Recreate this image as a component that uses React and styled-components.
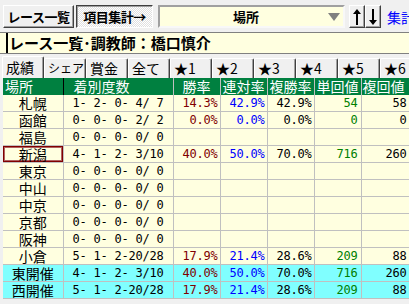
import styled, { createGlobalStyle, css } from 'styled-components';

const GlobalStyle = createGlobalStyle`
  html, body { margin: 0; padding: 0; background: #f0f0f0; }
  body { font-family: "Noto Sans CJK JP", "Noto Sans", sans-serif; }
`;

const rows = [
  { place: '札幌', count: '1- 2- 0- 4/ 7', win: '14.3%', ren: '42.9%', fuku: '42.9%', tan: '54', fkv: '58' },
  { place: '函館', count: '0- 0- 0- 2/ 2', win: '0.0%', ren: '0.0%', fuku: '0.0%', tan: '0', fkv: '0' },
  { place: '福島', count: '0- 0- 0- 0/ 0' },
  { place: '新潟', count: '4- 1- 2- 3/10', win: '40.0%', ren: '50.0%', fuku: '70.0%', tan: '716', fkv: '260', selected: true },
  { place: '東京', count: '0- 0- 0- 0/ 0' },
  { place: '中山', count: '0- 0- 0- 0/ 0' },
  { place: '中京', count: '0- 0- 0- 0/ 0' },
  { place: '京都', count: '0- 0- 0- 0/ 0' },
  { place: '阪神', count: '0- 0- 0- 0/ 0' },
  { place: '小倉', count: '5- 1- 2-20/28', win: '17.9%', ren: '21.4%', fuku: '28.6%', tan: '209', fkv: '88' },
  { place: '東開催', count: '4- 1- 2- 3/10', win: '40.0%', ren: '50.0%', fuku: '70.0%', tan: '716', fkv: '260', total: true },
  { place: '西開催', count: '5- 1- 2-20/28', win: '17.9%', ren: '21.4%', fuku: '28.6%', tan: '209', fkv: '88', total: true },
];

const tabs = ['成績', 'シェア', '賞金', '全て', '★1', '★2', '★3', '★4', '★5', '★6'];

function App() {
  return (
    <Window>
      <GlobalStyle />
      <TopBar>
        <Button $w={71}>レース一覧</Button>
        <Button $w={77} $pressed>項目集計→</Button>
        <Combo>
          <ComboText>場所</ComboText>
          <Caret />
        </Combo>
        <ArrowGroup>
          <ArrowButton>
            <svg width="8" height="16" viewBox="0 0 8 16">
              <path d="M4 0 L8 5 L5 5 L5 16 L3 16 L3 5 L0 5 Z" fill="#000" />
            </svg>
          </ArrowButton>
          <ArrowButton>
            <svg width="8" height="16" viewBox="0 0 8 16">
              <path d="M4 16 L8 11 L5 11 L5 0 L3 0 L3 11 L0 11 Z" fill="#000" />
            </svg>
          </ArrowButton>
        </ArrowGroup>
        <LinkText>集計</LinkText>
      </TopBar>

      <TitleBar>
        <TitleText>レース一覧･調教師：橋口慎介</TitleText>
      </TitleBar>

      <TabRow>
        {tabs.map((t, i) => (
          <Tab key={t} $active={i === 0} $narrow={t === 'シェア'}>{t}</Tab>
        ))}
      </TabRow>

      <Table>
        <colgroup>
          <col style={{ width: 60 }} />
          <col style={{ width: 110 }} />
          <col style={{ width: 47 }} />
          <col style={{ width: 47 }} />
          <col style={{ width: 47 }} />
          <col style={{ width: 47 }} />
          <col style={{ width: 52 }} />
        </colgroup>
        <thead>
          <tr>
            <Th $first $pad={2}>場所</Th>
            <Th $pad={10}>着別度数</Th>
            <Th $center>勝率</Th>
            <Th $center>連対率</Th>
            <Th $center>複勝率</Th>
            <Th $center>単回値</Th>
            <Th $pad={1}>複回値</Th>
          </tr>
        </thead>
        <tbody>
          {rows.map((r) => (
            <Row key={r.place} $total={r.total}>
              <PlaceCell $selected={r.selected}>{r.place}</PlaceCell>
              <CountCell>{r.count}</CountCell>
              <NumCell $color="#800000">{r.win}</NumCell>
              <NumCell $color="#0000ff">{r.ren}</NumCell>
              <NumCell $color="#000">{r.fuku}</NumCell>
              <NumCell $color="#008000" $right={3}>{r.tan}</NumCell>
              <NumCell $color="#000" $right={6}>{r.fkv}</NumCell>
            </Row>
          ))}
        </tbody>
      </Table>
    </Window>
  );
}

const Window = styled.div`
  width: 409px;
  height: 304px;
  overflow: hidden;
  background: #f0f0f0;
`;

const TopBar = styled.div`
  display: flex;
  align-items: flex-start;
  height: 32px;
  box-sizing: border-box;
  padding: 5px 0 0 3px;
`;

const Button = styled.div`
  box-sizing: border-box;
  flex: none;
  width: ${(p) => p.$w}px;
  height: 23px;
  margin-right: 2px;
  display: flex;
  align-items: center;
  justify-content: center;
  white-space: nowrap;
  font-size: 13px;
  font-weight: bold;
  letter-spacing: -0.5px;
  color: #000;
  border: 1px solid;
  border-color: #fff #404040 #404040 #fff;
  box-shadow: inset -1px -1px 0 #a0a0a0;
  background: #f0f0f0;
  ${(p) =>
    p.$pressed &&
    css`
      border-color: #404040 #fff #fff #404040;
      box-shadow: inset 1px 1px 0 #a0a0a0;
      background: repeating-conic-gradient(#ffffff 0 25%, #e0e0e0 0 50%) 0 0 / 2px 2px;
    `}
`;

const Combo = styled.div`
  box-sizing: border-box;
  flex: none;
  width: 187px;
  height: 23px;
  margin-left: 3px;
  display: flex;
  align-items: center;
  background: #ffffe0;
  border: 2px solid;
  border-color: #a0a0a0 #f8f8f8 #f8f8f8 #a0a0a0;
`;

const ComboText = styled.span`
  flex: 1;
  text-align: center;
  font-size: 13px;
  font-weight: bold;
  padding-left: 4px;
`;

const Caret = styled.span`
  width: 0;
  height: 0;
  margin-right: 3px;
  border-left: 6px solid transparent;
  border-right: 6px solid transparent;
  border-top: 8px solid #808080;
`;

const ArrowGroup = styled.div`
  display: flex;
  flex: none;
  margin-left: 4px;
`;

const ArrowButton = styled.div`
  box-sizing: border-box;
  width: 16px;
  height: 23px;
  display: flex;
  align-items: center;
  justify-content: center;
  background: #f0f0f0;
  border: 1px solid;
  border-color: #fff #404040 #404040 #fff;
  box-shadow: inset -1px -1px 0 #a0a0a0;
`;

const LinkText = styled.span`
  margin-left: 6px;
  margin-top: 2px;
  font-size: 14px;
  color: #0000ff;
  white-space: nowrap;
`;

const TitleBar = styled.div`
  box-sizing: border-box;
  height: 22px;
  background: #ffffe0;
  border-top: 1px solid #808080;
  border-bottom: 1px solid #808080;
  padding-left: 6px;
  display: flex;
`;

const TitleText = styled.div`
  border-left: 2px solid #000;
  padding-left: 1px;
  font-size: 15px;
  font-weight: bold;
  line-height: 20px;
  white-space: nowrap;
`;

const TabRow = styled.div`
  display: flex;
  height: 24px;
  box-sizing: border-box;
  padding: 2px 0 0 2px;
  align-items: flex-end;
`;

const Tab = styled.div`
  box-sizing: border-box;
  width: 42px;
  flex: none;
  height: 20px;
  padding-left: 3px;
  font-size: ${(p) => (p.$narrow ? 12 : 14)}px;
  line-height: 18px;
  white-space: nowrap;
  background: #f0f0f0;
  border-top: 1px solid #fff;
  border-left: 1px solid #fff;
  border-right: 1px solid #404040;
  box-shadow: inset -1px 0 0 #a0a0a0;
  border-radius: 2px 2px 0 0;
  ${(p) =>
    p.$active &&
    css`
      height: 22px;
      line-height: 20px;
    `}
`;

const Table = styled.table`
  margin-left: 3px;
  border-collapse: collapse;
  table-layout: fixed;
  width: 410px;
`;

const Th = styled.th`
  height: 17px;
  box-sizing: border-box;
  padding: 0 0 0 ${(p) => p.$pad || 0}px;
  background: #008040;
  color: #fff;
  font-weight: normal;
  font-size: 14px;
  line-height: 17px;
  text-align: ${(p) => (p.$center ? 'center' : 'left')};
  white-space: nowrap;
  border-right: 1px solid ${(p) => (p.$first ? '#000' : '#c0c0c0')};
`;

const Row = styled.tr`
  background: ${(p) => (p.$total ? '#80ffff' : '#ffffe0')};
  td {
    height: 16px;
    padding: 0;
    border-right: 1px solid #c0c0c0;
    border-bottom: 1px solid #c0c0c0;
    white-space: pre;
  }
`;

const PlaceCell = styled.td`
  text-align: center;
  font-size: 14px;
  line-height: 16px;
  ${(p) =>
    p.$selected &&
    css`
      box-shadow: inset 0 0 0 1px #800000, inset 0 0 0 2px #b06060;
    `}
`;

const mono = css`
  font-family: "DejaVu Sans Mono", "Liberation Mono", monospace;
  font-size: 12px;
  letter-spacing: -0.22px;
  line-height: 16px;
`;

const CountCell = styled.td`
  ${mono}
  text-align: center;
  color: #000;
`;

const NumCell = styled.td`
  ${mono}
  text-align: right;
  color: ${(p) => p.$color};
  && {
    padding-right: ${(p) => p.$right ?? 2}px;
  }
`;

export default App;
